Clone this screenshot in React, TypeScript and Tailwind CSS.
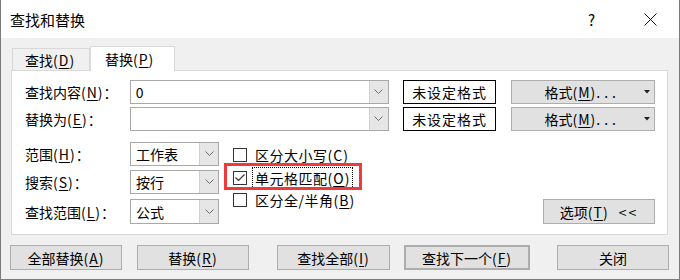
import React from "react";

const font = "font-['Noto_Sans_CJK_SC',sans-serif]";

function Chevron() {
    return (
        <svg width="9" height="6" viewBox="0 0 9 6" className="block">
            <polyline points="0.5,0.5 4.5,4.5 8.5,0.5" fill="none" stroke="#6d6d6d" strokeWidth="1" />
        </svg>
    );
}

function Combo({ width, value }: { width: string; value?: string }) {
    return (
        <div className={`${width} h-full flex border border-[#a8a8a8] bg-white`}>
            <div className="flex-1 pl-[5px] flex items-center text-[14px] leading-none">{value}</div>
            <div className="w-[19px] bg-[#e6e6e6] border-l border-[#d0d0d0] flex items-center justify-center">
                <Chevron />
            </div>
        </div>
    );
}

function Key({ k }: { k: string }) {
    return (
        <span className="tracking-[1px]">
            (<span className="underline underline-offset-2">{k}</span>)
        </span>
    );
}

function Button({ children, className = "" }: { children: React.ReactNode; className?: string }) {
    return (
        <div className={`h-[25px] bg-[#e1e1e1] border border-[#adadad] flex items-center justify-center text-[14px] leading-none ${className}`}>
            {children}
        </div>
    );
}

function FormatButton() {
    return (
        <div className="ml-[15px] w-[144px] h-full bg-[#e1e1e1] border border-[#adadad] flex items-center text-[14px] leading-none">
            <div className="flex-1 text-center pl-[8px]">
                格式<Key k="M" /><span className="tracking-[4px]">...</span>
            </div>
            <svg width="6" height="4" viewBox="0 0 6 4" className="mr-[4px]">
                <polygon points="0,0 6,0 3,3.5" fill="#222" />
            </svg>
        </div>
    );
}

function Checkbox({ checked }: { checked?: boolean }) {
    return (
        <div className="w-[14px] h-[14px] border border-[#333] bg-white flex items-center justify-center">
            {checked && (
                <svg width="10" height="8" viewBox="0 0 10 8">
                    <polyline points="0.5,3.5 3.5,6.5 9.5,0.5" fill="none" stroke="#333" strokeWidth="1.2" />
                </svg>
            )}
        </div>
    );
}

export default function App() {
    return (
        <div className={`w-[680px] h-[280px] flex flex-col border-x border-b border-[#7a7a7a] bg-[#f0f0f0] text-black ${font}`}>
            {/* 标题栏 */}
            <div className="h-[38px] bg-white flex items-center pl-[9px] shrink-0">
                <span className="text-[15px] leading-none">查找和替换</span>
                <span className="ml-auto text-[15px] leading-none mr-[49px]">?</span>
                <svg width="13" height="13" viewBox="0 0 13 13" className="mr-[22px]">
                    <path d="M0.5 0.5 L12.5 12.5 M12.5 0.5 L0.5 12.5" stroke="#111" strokeWidth="1" />
                </svg>
            </div>

            <div className="flex-1 pl-[10px] pt-[8px]">
                {/* 标签页 */}
                <div className="flex items-end h-[24px] pl-[1px]">
                    <div className="w-[78px] h-[22px] border border-b-0 border-[#d9d9d9] bg-[#f0f0f0] flex items-center pl-[12px] text-[14px] leading-none">
                        查找<Key k="D" />
                    </div>
                    <div className="w-[85px] h-[25px] -mb-px relative z-10 border border-b-0 border-[#d9d9d9] bg-white flex items-center pl-[14px] text-[14px] leading-none">
                        替换<Key k="P" />
                    </div>
                </div>

                {/* 面板 */}
                <div className="relative w-[657px] h-[165px] border border-[#d9d9d9] bg-white pl-[13px] pr-[12px] pt-[9px] text-[14px] leading-none">
                    <div className="flex items-center h-[24px]">
                        <div className="w-[105px]">查找内容<Key k="N" />：</div>
                        <Combo width="w-[260px]" value="0" />
                        <div className="ml-[14px] w-[94px] h-full border border-black flex items-center justify-center tracking-[1px]">未设定格式</div>
                        <FormatButton />
                    </div>
                    <div className="flex items-center h-[24px] mt-[3px]">
                        <div className="w-[105px]">替换为<Key k="E" />：</div>
                        <Combo width="w-[260px]" />
                        <div className="ml-[14px] w-[94px] h-full border border-black flex items-center justify-center tracking-[1px]">未设定格式</div>
                        <FormatButton />
                    </div>

                    <div className="flex mt-[11px]">
                        <div className="flex flex-col">
                            <div className="flex items-center h-[24px]">
                                <div className="w-[105px]">范围<Key k="H" />：</div>
                                <Combo width="w-[89px]" value="工作表" />
                            </div>
                            <div className="flex items-center h-[24px] mt-[4px]">
                                <div className="w-[105px]">搜索<Key k="S" />：</div>
                                <Combo width="w-[89px]" value="按行" />
                            </div>
                            <div className="flex items-center h-[25px] mt-[5px]">
                                <div className="w-[105px]">查找范围<Key k="L" />：</div>
                                <Combo width="w-[89px]" value="公式" />
                            </div>
                        </div>

                        <div className="flex flex-col ml-[14px] pt-[2px]">
                            <div className="flex items-center h-[22px]">
                                <Checkbox />
                                <span className="ml-[8px] tracking-[0.5px]">区分大小写<Key k="C" /></span>
                            </div>
                            <div className="flex items-center h-[23px]">
                                <Checkbox checked />
                                <span className="ml-[5px] px-[2px] py-[3px] border border-dotted border-black tracking-[0.5px]">单元格匹配<Key k="O" /></span>
                            </div>
                            <div className="flex items-center h-[22px]">
                                <Checkbox />
                                <span className="ml-[8px] tracking-[0.5px]">区分全/半角<Key k="B" /></span>
                            </div>
                        </div>

                        <div className="flex-1 flex items-end justify-end">
                            <Button className="w-[112px] h-[25px]">
                                选项<Key k="T" />
                                <span className="ml-[10px] tracking-[2px]">&lt;&lt;</span>
                            </Button>
                        </div>
                    </div>

                    {/* 红框标注 */}
                    <div className="absolute left-[212px] top-[92px] w-[138px] h-[27px] border-[3px] border-[#ee3a3a]" />
                </div>

                {/* 底部按钮 */}
                <div className="flex mt-[10px] -ml-px">
                    <Button className="w-[112px]">全部替换<Key k="A" /></Button>
                    <Button className="w-[112px] ml-[15px]">替换<Key k="R" /></Button>
                    <Button className="w-[113px] ml-[28px]">查找全部<Key k="I" /></Button>
                    <Button className="w-[126px] ml-[14px] border-2 border-[#0078d7]">查找下一个<Key k="F" /></Button>
                    <Button className="w-[112px] ml-[27px]">关闭</Button>
                </div>
            </div>
        </div>
    );
}
